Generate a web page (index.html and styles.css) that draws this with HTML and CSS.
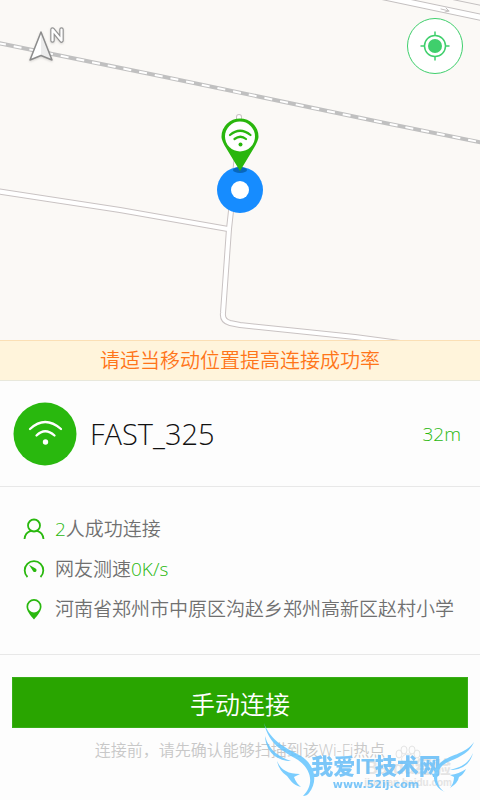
FILE: index.html
```html
<!DOCTYPE html>
<html lang="zh-CN">
<head>
  <meta charset="UTF-8" />
  <meta name="viewport" content="width=device-width, initial-scale=1" />
  <title>FAST_325</title>
  <link rel="stylesheet" href="styles.css">
</head>
<body>
  <div class="mapa">
    <svg class="calles" viewBox="0 0 480 340" preserveAspectRatio="xMidYMid slice" aria-hidden="true">
      <!-- roads -->
      <g fill="none" stroke-linejoin="round" stroke-linecap="round">
        <path class="borde" d="M239 117 V134 L235 175 L229 229 L223 313 Q222 321 230 323 L240 325 L355 337 L400 343" />
        <path class="borde" d="M-4 191 L120 210 L228 229" />
        <path class="via" d="M239 117 V134 L235 175 L229 229 L223 313 Q222 321 230 323 L240 325 L355 337 L400 343" />
        <path class="via" d="M-4 191 L120 210 L228 229" />
        <path class="borde-ancho" d="M375 -5 L484 18" />
        <path class="via-ancha" d="M375 -5 L484 18" />
        <path class="flecha" d="M441 9 L449 11 M446 8 L449 11 L445 12" />
        <path class="flecha" d="M450 -1 L484 6" />
      </g>
      <!-- railway -->
      <path class="tren" d="M-2 43 L160 76 L380 122 L484 143" />
      <path class="tren-claro" d="M-2 43 L160 76 L380 122 L484 143" />
    </svg>

    <svg class="norte" viewBox="0 0 44 44" role="img" aria-label="N">
      <path d="M16 10 L5 38 L16 33.500 L27 38 Z" fill="#fff" />
      <path d="M16 10 L27 38 L16 33.500 Z" fill="#ececec" />
      <path d="M16 10 L5 38 L16 33.500 L27 38 Z" fill="none" stroke="#8c8c8c" stroke-width="1.500" stroke-linejoin="round" />
      <g fill="none" stroke-linejoin="round" stroke-linecap="round">
        <path d="M27.500 18.500 V7.500 L36.500 18.500 V7.500" stroke="#929292" stroke-width="4.500" />
        <path d="M27.500 18.500 V7.500 L36.500 18.500 V7.500" stroke="#fff" stroke-width="2.200" />
      </g>
    </svg>

    <button class="ubicar" type="button" aria-label="定位">
      <svg viewBox="0 0 30 30">
        <circle cx="15" cy="15" r="7" fill="#3fcf6c" />
        <circle cx="15" cy="15" r="10.500" fill="none" stroke="#3fcf6c" stroke-width="1.500" />
        <path d="M15 0.500 V5 M15 25 V29.500 M0.500 15 H5 M25 15 H29.500" stroke="#3fcf6c" stroke-width="1.500" />
      </svg>
    </button>

    <svg class="marcador" viewBox="0 0 48 96" aria-hidden="true">
      <circle cx="24" cy="72" r="23" fill="#168cff" />
      <circle cx="24" cy="72" r="9" fill="#fff" />
      <ellipse cx="24" cy="52" rx="7" ry="3" fill="#0967bb" />
      <path d="M24 53 L9.500 29 C6 23 5.500 20 5.500 18.500 A18.500 18 0 0 1 42.500 18.500 C42.500 20 42 23 38.500 29 Z" fill="#29b60d" />
      <circle cx="24" cy="18.500" r="15" fill="#fff" />
      <g fill="none" stroke="#29b60d" stroke-width="2.200" stroke-linecap="round">
        <path d="M14 17 Q24 8.500 34.500 17" />
        <path d="M18.500 21 Q24.500 16.500 30 21" />
      </g>
      <circle cx="24.500" cy="26.500" r="2" fill="#29b60d" />
    </svg>
  </div>

  <p class="aviso">请适当移动位置提高连接成功率</p>

  <div class="red">
    <svg class="wifi" viewBox="0 0 64 64" aria-hidden="true">
      <circle cx="32" cy="32" r="31.500" fill="#29b80e" />
      <g fill="none" stroke="#fff" stroke-width="2.300" stroke-linecap="round">
        <path d="M17 27 Q32 13 48 27" />
        <path d="M23.500 33.500 Q32 25 41.500 33.500" />
      </g>
      <circle cx="32.500" cy="40" r="2.700" fill="#fff" />
    </svg>
    <h1>FAST_325</h1>
    <span class="distancia">32m</span>
  </div>

  <ul class="datos">
    <li>
      <svg class="icono" viewBox="0 0 22 22" aria-hidden="true">
        <circle cx="11" cy="7.500" r="6" />
        <path d="M1.500 21 C2 16 5 13.500 8 12.800 M14 12.800 C17 13.500 20 16 20.500 21" />
      </svg>
      <span><b>2</b>人成功连接</span>
    </li>
    <li>
      <svg class="icono" viewBox="0 0 22 22" aria-hidden="true">
        <path d="M4.500 19 A9.300 9.300 0 1 1 17.500 19" />
        <path class="lleno" d="M6 6.800 L12.500 10.500 A1.900 1.900 0 1 1 9.800 12.700 Z" />
      </svg>
      <span>网友测速<b>0K/s</b></span>
    </li>
    <li>
      <svg class="icono" viewBox="0 0 22 22" aria-hidden="true">
        <path class="lleno" fill-rule="evenodd" d="M11 1 A7.500 7.500 0 0 1 18.500 8.500 C18.500 12.500 15 17 11 21.500 C7 17 3.500 12.500 3.500 8.500 A7.500 7.500 0 0 1 11 1 Z M11 2.800 A5.800 5.800 0 1 0 11 14.500 A5.800 5.800 0 1 0 11 2.800 Z" />
      </svg>
      <span>河南省郑州市中原区沟赵乡郑州高新区赵村小学</span>
    </li>
  </ul>

  <div class="accion">
    <button class="conectar" type="button">手动连接</button>
    <p class="nota">连接前，请先确认能够扫描到该Wi-Fi热点</p>
  </div>

  <div class="fondo">
    <svg viewBox="0 0 26 18" aria-hidden="true">
      <ellipse cx="4" cy="9" rx="3" ry="4" />
      <ellipse cx="9" cy="5" rx="3" ry="4" />
      <ellipse cx="17" cy="5" rx="3" ry="4" />
      <ellipse cx="22" cy="9" rx="3" ry="4" />
      <path d="M13 9 C9 9 5 13 7 16 C9 18 11 16 13 16 C15 16 17 18 19 16 C21 13 17 9 13 9 Z" />
    </svg>
    <span class="fondo-nombre">Baidu经验</span>
    <span class="fondo-sitio">jingyan.baidu.com</span>
  </div>

  <div class="sello">
    <svg viewBox="0 0 216 76" aria-hidden="true">
      <path d="M1 0 C8 19 24 25 38 33 C51 41 56 57 46 70 Q44 73 40 73 C52 61 48 46 35 37 C20 28 6 22 1 0 Z" />
      <path d="M2 13 C6 28 17 34 28 38 C16 38 3 31 2 13 Z" />
      <path d="M14 38 C18 47 25 51 37 51 L31 54 Q33 60 38 64 C29 62 26 55 24 53 Q16 48 14 38 Z" />
      <path d="M211 19 C205 34 188 36 180 42 C171 50 173 64 182 69 C169 64 168 50 176 41 C186 31 202 32 211 19 Z" />
      <path d="M210 30 C205 42 197 44 187 47 C198 47 207 42 210 30 Z" />
      <path d="M203 46 Q196 51 187 52 L191 54 Q191 60 187 65 Q195 60 196 54 Q201 51 203 46 Z" />
    </svg>
    <span class="sello-nombre">我爱IT技术网</span>
    <span class="sello-sitio">www.52ij.com</span>
  </div>
</body>
</html>
```
FILE: styles.css
```css
* {
  margin: 0;
  padding: 0;
  box-sizing: border-box;
}
body {
  position: relative;
  min-height: 100vh;
  overflow-x: hidden;
  background: #fdfdfd;
  color: #707070;
  font-family: "Open Sans", "Noto Sans CJK SC", sans-serif;
  font-weight: 300;
}

/* map */
.mapa {
  position: relative;
  height: 340px;
  background: #fbf9f6;
}
.calles {
  display: block;
  width: 100%;
  height: 100%;
}
.borde {
  stroke: #c9c3c3;
  stroke-width: 6;
}
.via {
  stroke: #fff;
  stroke-width: 4;
}
.borde-ancho {
  stroke: #c4c0c0;
  stroke-width: 7;
}
.via-ancha {
  stroke: #fff;
  stroke-width: 5;
}
.flecha {
  stroke: #c4c0c0;
}
.tren {
  fill: none;
  stroke: #c0c0c0;
  stroke-width: 4;
}
.tren-claro {
  fill: none;
  stroke: #fff;
  stroke-width: 2;
  stroke-dasharray: 8 8;
}
.norte {
  position: absolute;
  top: 22px;
  left: 25px;
  width: 44px;
  height: 44px;
  filter: drop-shadow(0 1px 1px rgba(0, 0, 0, 0.15));
}
.ubicar {
  position: absolute;
  top: 18px;
  right: 17px;
  display: flex;
  justify-content: center;
  align-items: center;
  width: 56px;
  height: 56px;
  border: 1px solid #3fcf6c;
  border-radius: 50%;
  background: #fff;
  cursor: pointer;
}
.ubicar svg {
  width: 30px;
  height: 30px;
}
.marcador {
  position: absolute;
  top: 118px;
  left: 50%;
  width: 48px;
  height: 96px;
  margin-left: -24px;
}

.aviso {
  padding-top: 1px;
  border-top: 1px solid #fbdfb5;
  border-bottom: 1px solid #e8e8dc;
  background: #fff4db;
  color: #ff7519;
  font-size: 20px;
  font-weight: 350;
  line-height: 38px;
  text-align: center;
}

/* network */
.red {
  display: flex;
  align-items: center;
  gap: 13px;
  height: 106px;
  padding: 0 19px 0 13px;
  border-bottom: 1px solid #e8e8e8;
}
.wifi {
  width: 64px;
  height: 64px;
}
.red h1 {
  color: #111;
  font-size: 29px;
  font-weight: 300;
}
.distancia {
  margin-left: auto;
  color: #29b80e;
  font-size: 19px;
}
.datos {
  display: grid;
  gap: 12px;
  padding: 28px 23px 31px;
  border-bottom: 1px solid #e8e8e8;
  list-style: none;
  font-size: 19px;
  font-weight: 350;
  line-height: 28px;
}
.datos li {
  display: flex;
  align-items: center;
  gap: 10px;
}
.datos b {
  color: #29b80e;
  font-weight: 300;
}
.icono {
  flex: none;
  width: 22px;
  height: 22px;
  fill: none;
  stroke: #29b80e;
  stroke-width: 1.8px;
}
.icono .lleno {
  fill: #29b80e;
  stroke: none;
}

.accion {
  padding: 22px 12px;
}
.conectar {
  display: block;
  width: 100%;
  height: 51px;
  border: 1px solid #38ae17;
  background: #29a500;
  color: #fff;
  font: inherit;
  font-size: 25px;
  font-weight: 350;
  cursor: pointer;
}
.nota {
  margin-top: 10px;
  color: #c8c8c8;
  font-size: 16px;
  font-weight: 350;
  line-height: 24px;
  text-align: center;
}

/* watermarks */
.fondo {
  position: absolute;
  top: 745px;
  right: 28px;
  display: flex;
  flex-direction: column;
  align-items: center;
  color: #e4e4e4;
  font-family: "Liberation Sans", "Noto Sans CJK SC", sans-serif;
  font-weight: 700;
}
.fondo svg {
  width: 26px;
  height: 18px;
  margin-bottom: -4px;
  fill: none;
  stroke: #e4e4e4;
}
.fondo-nombre {
  font-size: 18px;
  line-height: 18px;
}
.fondo-sitio {
  font-size: 10px;
  line-height: 12px;
}
.sello {
  position: absolute;
  top: 723px;
  right: 1px;
  display: flex;
  flex-direction: column;
  align-items: center;
  width: 216px;
  height: 76px;
  padding: 32px 0 0 10px;
  color: #65bdf8;
  font-family: "Liberation Sans", "Noto Sans CJK SC", sans-serif;
  font-weight: 700;
  opacity: 0.85;
}
.sello svg {
  position: absolute;
  top: 0;
  left: 0;
  width: 216px;
  height: 76px;
  fill: #65c5ff;
}
.sello-nombre {
  font-size: 22px;
  font-weight: 900;
  line-height: 24px;
}
.sello-sitio {
  font-family: "DejaVu Sans", sans-serif;
  font-size: 11px;
  line-height: 12px;
}
```
